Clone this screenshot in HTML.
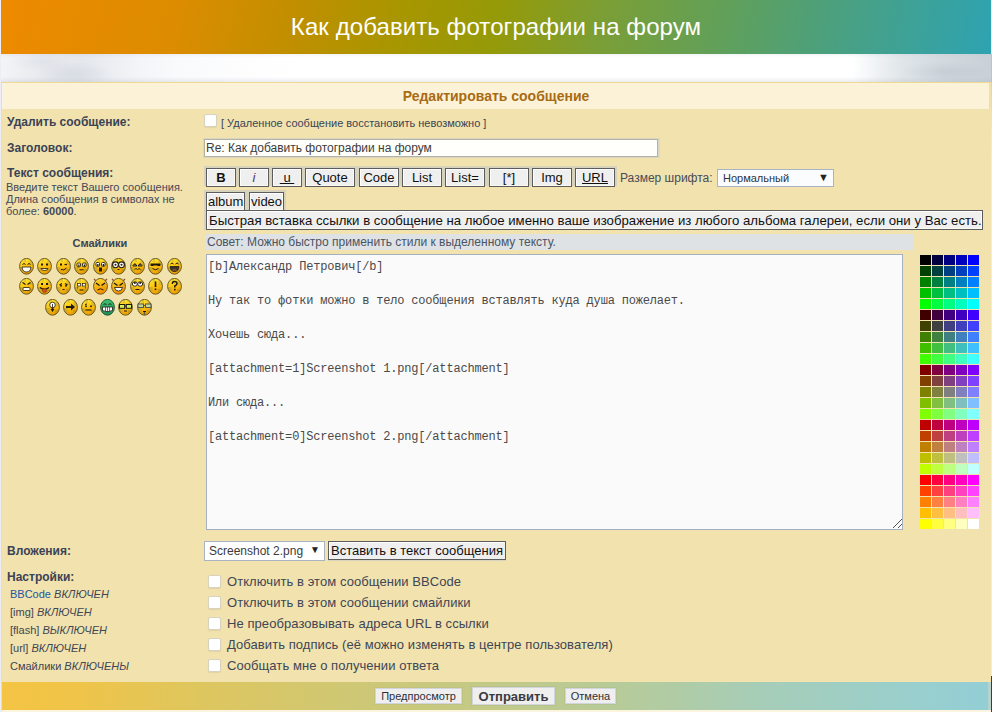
<!DOCTYPE html>
<html><head><meta charset="utf-8">
<style>
*{box-sizing:border-box}
html,body{margin:0;padding:0}
body{width:992px;height:712px;overflow:hidden;position:relative;background:#fdfcf6;font-family:"Liberation Sans",sans-serif;color:#333a48}
.a{position:absolute;white-space:nowrap}
#lcol{position:absolute;left:0;top:0;width:1px;height:712px;background:#eeecf4}
#rcol{position:absolute;left:991px;top:0;width:1px;height:712px;background:linear-gradient(180deg,#e8ecf0 0,#e8ecf0 54px,#b9c5cd 54px,#b9c5cd 82px,#cdd1d5 82px,#e6e6ee 130px,#eceaf4 160px,#eceaf4 676px,#2f4a2a 676px)}
#rcol2{position:absolute;left:988px;top:682px;width:3px;height:28px;background:#b9d3cb}
#hdr{position:absolute;left:1px;top:0;width:990px;height:54px;
 background:linear-gradient(103deg,#ee8a00 0%,#dc8c00 18%,#c08f00 30%,#a89600 40%,#959a08 50%,#7c9e34 60%,#62a058 72%,#4aa080 84%,#2ea3b2 100%)}
#title{position:absolute;left:0;width:990px;top:13px;text-align:center;color:#fff;font-size:24px;line-height:28px;letter-spacing:0.08px}
#cloud{position:absolute;left:1px;top:54px;width:990px;height:28px;
 background:radial-gradient(ellipse 40px 12px at 72px 20px,rgba(170,180,195,0.22),rgba(170,180,195,0)),
 radial-gradient(ellipse 30px 10px at 40px 8px,rgba(170,180,195,0.14),rgba(170,180,195,0)),
 radial-gradient(ellipse 45px 10px at 945px 18px,rgba(140,155,170,0.18),rgba(140,155,170,0)),
 linear-gradient(180deg,rgba(170,180,195,0.14) 0,rgba(170,180,195,0) 12%,rgba(150,165,180,0) 82%,rgba(150,165,180,0.2) 100%),
 linear-gradient(90deg,#f3f4f7 0,#eceef2 2.5%,#e7e9ee 5%,#e4e7ec 8%,#e8ebf0 10%,#eef0f4 12%,#f4f5f8 14%,#f9fafb 18%,#fdfdfe 24%,#fff 30%,#fff 86%,#eff2f4 88.5%,#dfe5e9 91%,#d3dadf 95%,#c8d1d7 100%)}
#tbl{position:absolute;left:1px;top:82px;width:990px;height:630px;background:#f1e2ae;border:1px solid #f0d992;border-left-color:#ece0a8;border-right:0;border-bottom:2px solid #fbf5e0}
#cat{position:absolute;left:0;top:0;width:988px;height:26px;background:#fcf2d7;border-left:1px solid #f9f4e4;border-right:1px solid #f5df98}
#cat span{position:absolute;left:0;width:986px;top:5px;text-align:center;font-weight:bold;font-size:14px;color:#a96b12}
.lbl{font-weight:bold;font-size:12px;line-height:14px;color:#3b4355}
.s11{font-size:11px;line-height:12px}
.cb{position:absolute;width:13px;height:13px;background:#fff;border:1px solid #d6d2c0;border-radius:2px;box-shadow:0 1px 1px rgba(120,110,80,0.12)}
.inp{position:absolute;background:#fffffb;border:1px solid #b4b2a2;box-shadow:0 0 0 1px #d9d6c3,1px 0 0 1px #dcd9c6}
.btn{position:absolute;height:19px;background:#efefef;border:1px solid #5c5c5c;box-shadow:inset 1px 1px 0 #fff,inset -1px -1px 0 #fafaf0;font-size:13px;line-height:17px;text-align:center;color:#111}
.shade{position:absolute;background:#d6d2bc}
.sel{position:absolute;background:#fff;border:1px solid #a9b4c2}
.pal{position:absolute;width:11px;height:10px}
#bar{position:absolute;left:2px;top:682px;width:986px;height:28px;
 background:linear-gradient(90deg,#f4c444 0%,#f0c448 7%,#dec65e 20%,#ccc878 38%,#b7cb98 62%,#a6cdb8 77%,#9acfcb 91%,#93ced6 100%)}
.bb{position:absolute;background:#efefef;border:1px solid #d2d6dc;font-size:11px;line-height:15px;text-align:center;color:#2e2e38;box-shadow:0 0 0 1px rgba(150,150,120,0.12)}
#ta{position:absolute;left:206px;top:254px;width:697px;height:276px;background:#fafafa;border:1px solid #a4b1c2;font-family:"Liberation Mono",monospace;font-size:12px;letter-spacing:-0.19px;line-height:17px;color:#4a4a4a;padding:0 0 0 1px}
#ta div{height:17px;white-space:pre}
</style></head><body>
<div id="lcol"></div>
<div id="hdr"><div id="title">Как добавить фотографии на форум</div></div>
<div id="cloud"></div>
<div id="tbl"><div id="cat"><span>Редактировать сообщение</span></div></div>
<div class="a lbl" style="left:7px;top:115px">Удалить сообщение:</div>
<div class="a lbl" style="left:7px;top:141px">Заголовок:</div>
<div class="a lbl" style="left:7px;top:166px">Текст сообщения:</div>
<div class="a s11" style="left:6px;top:180.5px;color:#434857">Введите текст Вашего сообщения.<br>Длина сообщения в символах не<br>более: <b>60000</b>.</div>
<div class="a lbl" style="left:72.5px;top:236px;font-size:11px">Смайлики</div>
<svg width="0" height="0" style="position:absolute"><defs>
<linearGradient id="gy" x1="0" y1="0" x2="0.3" y2="1"><stop offset="0" stop-color="#fff23a"/><stop offset="0.5" stop-color="#ffc814"/><stop offset="1" stop-color="#eea000"/></linearGradient>
<linearGradient id="go" x1="0" y1="0" x2="0.3" y2="1"><stop offset="0" stop-color="#ffe030"/><stop offset="1" stop-color="#f09000"/></linearGradient>
<clipPath id="fc"><ellipse cx="7.5" cy="8.3" rx="6.9" ry="7.9"/></clipPath>
<linearGradient id="gg" x1="0" y1="0" x2="0" y2="1"><stop offset="0" stop-color="#3fc070"/><stop offset="1" stop-color="#1f8a50"/></linearGradient>
</defs></svg><svg class="a" style="left:19px;top:258px" width="15" height="17" viewBox="0 0 15 17"><ellipse cx="7.5" cy="8.3" rx="6.9" ry="7.9" fill="url(#gy)"/><g clip-path="url(#fc)" opacity="0.45"><rect x="0" y="9" width="4.5" height="8" fill="#a09a48"/><rect x="10.5" y="1" width="5" height="6" fill="#b0a448"/><rect x="10" y="11" width="5" height="6" fill="#a08a30"/><rect x="4.5" y="0" width="2.5" height="4" fill="#c0b040"/></g><ellipse cx="7.5" cy="8.3" rx="6.9" ry="7.9" fill="none" stroke="#6b5a24" stroke-width="1"/><path d="M3.5 6.5Q5 4.5 6.5 6.5M8.5 6.5Q10 4.5 11.5 6.5" stroke="#1e1a10" fill="none" stroke-width="1"/><path d="M3 9H12Q11.5 14 7.5 14Q3.5 14 3 9Z" fill="#fff" stroke="#1e1a10" stroke-width="0.8"/></svg><svg class="a" style="left:37px;top:258px" width="15" height="17" viewBox="0 0 15 17"><ellipse cx="7.5" cy="8.3" rx="6.9" ry="7.9" fill="url(#gy)"/><g clip-path="url(#fc)" opacity="0.45"><rect x="0" y="9" width="4.5" height="8" fill="#a09a48"/><rect x="10.5" y="1" width="5" height="6" fill="#b0a448"/><rect x="10" y="11" width="5" height="6" fill="#a08a30"/><rect x="4.5" y="0" width="2.5" height="4" fill="#c0b040"/></g><ellipse cx="7.5" cy="8.3" rx="6.9" ry="7.9" fill="none" stroke="#6b5a24" stroke-width="1"/><rect x="4" y="5.5" width="2" height="2" fill="#1e1a10"/><rect x="9" y="5.5" width="2" height="2" fill="#1e1a10"/><path d="M4 10.5H11Q10.5 12.5 7.5 12.5Q4.5 12.5 4 10.5Z" fill="#fff8d0" stroke="#1e1a10" stroke-width="0.8"/></svg><svg class="a" style="left:56px;top:258px" width="15" height="17" viewBox="0 0 15 17"><ellipse cx="7.5" cy="8.3" rx="6.9" ry="7.9" fill="url(#gy)"/><g clip-path="url(#fc)" opacity="0.45"><rect x="0" y="9" width="4.5" height="8" fill="#a09a48"/><rect x="10.5" y="1" width="5" height="6" fill="#b0a448"/><rect x="10" y="11" width="5" height="6" fill="#a08a30"/><rect x="4.5" y="0" width="2.5" height="4" fill="#c0b040"/></g><ellipse cx="7.5" cy="8.3" rx="6.9" ry="7.9" fill="none" stroke="#6b5a24" stroke-width="1"/><rect x="4" y="5.5" width="2" height="2" fill="#1e1a10"/><path d="M8.5 6.5H11" stroke="#1e1a10" stroke-width="1.2"/><path d="M5 11.5Q8 13 10.5 10" stroke="#1e1a10" fill="none" stroke-width="1"/></svg><svg class="a" style="left:74px;top:258px" width="15" height="17" viewBox="0 0 15 17"><ellipse cx="7.5" cy="8.3" rx="6.9" ry="7.9" fill="url(#gy)"/><g clip-path="url(#fc)" opacity="0.45"><rect x="0" y="9" width="4.5" height="8" fill="#a09a48"/><rect x="10.5" y="1" width="5" height="6" fill="#b0a448"/><rect x="10" y="11" width="5" height="6" fill="#a08a30"/><rect x="4.5" y="0" width="2.5" height="4" fill="#c0b040"/></g><ellipse cx="7.5" cy="8.3" rx="6.9" ry="7.9" fill="none" stroke="#6b5a24" stroke-width="1"/><rect x="3" y="5" width="3.5" height="3.8" rx="1" fill="#fff" stroke="#1e1a10" stroke-width="0.9"/><rect x="8.5" y="5" width="3.5" height="3.8" rx="1" fill="#fff" stroke="#1e1a10" stroke-width="0.9"/><rect x="4.2" y="6.5" width="1.3" height="2" fill="#1e1a10"/><rect x="9.7" y="6.5" width="1.3" height="2" fill="#1e1a10"/><path d="M5.5 11.8H9.5" stroke="#1e1a10" stroke-width="1"/></svg><svg class="a" style="left:93px;top:258px" width="15" height="17" viewBox="0 0 15 17"><ellipse cx="7.5" cy="8.3" rx="6.9" ry="7.9" fill="url(#gy)"/><g clip-path="url(#fc)" opacity="0.45"><rect x="0" y="9" width="4.5" height="8" fill="#a09a48"/><rect x="10.5" y="1" width="5" height="6" fill="#b0a448"/><rect x="10" y="11" width="5" height="6" fill="#a08a30"/><rect x="4.5" y="0" width="2.5" height="4" fill="#c0b040"/></g><ellipse cx="7.5" cy="8.3" rx="6.9" ry="7.9" fill="none" stroke="#6b5a24" stroke-width="1"/><rect x="3" y="4.5" width="3.5" height="3.8" rx="1" fill="#fff" stroke="#1e1a10" stroke-width="0.9"/><rect x="8.5" y="4.5" width="3.5" height="3.8" rx="1" fill="#fff" stroke="#1e1a10" stroke-width="0.9"/><rect x="4.2" y="6" width="1.3" height="2" fill="#1e1a10"/><rect x="9.7" y="6" width="1.3" height="2" fill="#1e1a10"/><rect x="6" y="9.5" width="3" height="4" fill="#1e1a10"/></svg><svg class="a" style="left:111px;top:258px" width="15" height="17" viewBox="0 0 15 17"><ellipse cx="7.5" cy="8.3" rx="6.9" ry="7.9" fill="url(#gy)"/><g clip-path="url(#fc)" opacity="0.45"><rect x="0" y="9" width="4.5" height="8" fill="#a09a48"/><rect x="10.5" y="1" width="5" height="6" fill="#b0a448"/><rect x="10" y="11" width="5" height="6" fill="#a08a30"/><rect x="4.5" y="0" width="2.5" height="4" fill="#c0b040"/></g><ellipse cx="7.5" cy="8.3" rx="6.9" ry="7.9" fill="none" stroke="#6b5a24" stroke-width="1"/><circle cx="4.5" cy="6.8" r="2.9" fill="#fff" stroke="#1e1a10" stroke-width="1.1"/><circle cx="10.5" cy="6.8" r="2.9" fill="#fff" stroke="#1e1a10" stroke-width="1.1"/><circle cx="4.5" cy="6.8" r="1" fill="#1e1a10"/><circle cx="10.5" cy="6.8" r="1" fill="#1e1a10"/><path d="M6.5 11.5H8.5" stroke="#1e1a10" stroke-width="1"/></svg><svg class="a" style="left:130px;top:258px" width="15" height="17" viewBox="0 0 15 17"><ellipse cx="7.5" cy="8.3" rx="6.9" ry="7.9" fill="url(#gy)"/><g clip-path="url(#fc)" opacity="0.45"><rect x="0" y="9" width="4.5" height="8" fill="#a09a48"/><rect x="10.5" y="1" width="5" height="6" fill="#b0a448"/><rect x="10" y="11" width="5" height="6" fill="#a08a30"/><rect x="4.5" y="0" width="2.5" height="4" fill="#c0b040"/></g><ellipse cx="7.5" cy="8.3" rx="6.9" ry="7.9" fill="none" stroke="#6b5a24" stroke-width="1"/><path d="M2.8 8Q4.8 3.5 6.8 8Z M8.2 8Q10.2 3.5 12.2 8Z" fill="#fff" stroke="#1e1a10" stroke-width="1"/><circle cx="5" cy="6.8" r="0.9" fill="#1e1a10"/><circle cx="10" cy="6.8" r="0.9" fill="#1e1a10"/><path d="M4.5 11.5L6 10.5L7.5 11.5L9 10.5L10.5 11.5" stroke="#1e1a10" fill="none" stroke-width="0.9"/></svg><svg class="a" style="left:148px;top:258px" width="15" height="17" viewBox="0 0 15 17"><ellipse cx="7.5" cy="8.3" rx="6.9" ry="7.9" fill="url(#gy)"/><g clip-path="url(#fc)" opacity="0.45"><rect x="0" y="9" width="4.5" height="8" fill="#a09a48"/><rect x="10.5" y="1" width="5" height="6" fill="#b0a448"/><rect x="10" y="11" width="5" height="6" fill="#a08a30"/><rect x="4.5" y="0" width="2.5" height="4" fill="#c0b040"/></g><ellipse cx="7.5" cy="8.3" rx="6.9" ry="7.9" fill="none" stroke="#6b5a24" stroke-width="1"/><path d="M2.5 5.5H12.5V7.5Q11 8.5 9 7.5H6Q4 8.5 2.5 7.5Z" fill="#1e1a10"/><path d="M4.5 10.5Q7.5 13 10.5 10.5" stroke="#1e1a10" fill="none" stroke-width="1"/></svg><svg class="a" style="left:167px;top:258px" width="15" height="17" viewBox="0 0 15 17"><ellipse cx="7.5" cy="8.3" rx="6.9" ry="7.9" fill="url(#gy)"/><g clip-path="url(#fc)" opacity="0.45"><rect x="0" y="9" width="4.5" height="8" fill="#a09a48"/><rect x="10.5" y="1" width="5" height="6" fill="#b0a448"/><rect x="10" y="11" width="5" height="6" fill="#a08a30"/><rect x="4.5" y="0" width="2.5" height="4" fill="#c0b040"/></g><ellipse cx="7.5" cy="8.3" rx="6.9" ry="7.9" fill="none" stroke="#6b5a24" stroke-width="1"/><path d="M3.5 6Q5 4 6.5 6M8.5 6Q10 4 11.5 6" stroke="#1e1a10" fill="none" stroke-width="1"/><path d="M3 8.5H12Q11.5 13.5 7.5 13.5Q3.5 13.5 3 8.5Z" fill="#3a3530" stroke="#1e1a10" stroke-width="0.8"/><path d="M5.5 12.3Q7.5 11 9.5 12.3" stroke="#d06020" stroke-width="1" fill="none"/></svg><svg class="a" style="left:19px;top:278px" width="15" height="17" viewBox="0 0 15 17"><ellipse cx="7.5" cy="8.3" rx="6.9" ry="7.9" fill="url(#gy)"/><g clip-path="url(#fc)" opacity="0.45"><rect x="0" y="9" width="4.5" height="8" fill="#a09a48"/><rect x="10.5" y="1" width="5" height="6" fill="#b0a448"/><rect x="10" y="11" width="5" height="6" fill="#a08a30"/><rect x="4.5" y="0" width="2.5" height="4" fill="#c0b040"/></g><ellipse cx="7.5" cy="8.3" rx="6.9" ry="7.9" fill="none" stroke="#6b5a24" stroke-width="1"/><path d="M3.5 4.5L6.5 6.5M11.5 4.5L8.5 6.5" stroke="#1e1a10" stroke-width="1.2"/><rect x="4" y="9.5" width="7" height="3" rx="1" fill="#fff" stroke="#1e1a10" stroke-width="0.8"/></svg><svg class="a" style="left:37px;top:278px" width="15" height="17" viewBox="0 0 15 17"><ellipse cx="7.5" cy="8.3" rx="6.9" ry="7.9" fill="url(#gy)"/><g clip-path="url(#fc)" opacity="0.45"><rect x="0" y="9" width="4.5" height="8" fill="#a09a48"/><rect x="10.5" y="1" width="5" height="6" fill="#b0a448"/><rect x="10" y="11" width="5" height="6" fill="#a08a30"/><rect x="4.5" y="0" width="2.5" height="4" fill="#c0b040"/></g><ellipse cx="7.5" cy="8.3" rx="6.9" ry="7.9" fill="none" stroke="#6b5a24" stroke-width="1"/><rect x="4" y="5" width="2" height="2" fill="#1e1a10"/><rect x="9" y="5" width="2" height="2" fill="#1e1a10"/><path d="M3 9.5Q7.5 13 12 9.5" stroke="#1e1a10" fill="none" stroke-width="1.3"/><ellipse cx="7.5" cy="12.6" rx="2.2" ry="2" fill="#d05020" stroke="#6a3010" stroke-width="0.5"/></svg><svg class="a" style="left:56px;top:278px" width="15" height="17" viewBox="0 0 15 17"><ellipse cx="7.5" cy="8.3" rx="6.9" ry="7.9" fill="url(#gy)"/><g clip-path="url(#fc)" opacity="0.45"><rect x="0" y="9" width="4.5" height="8" fill="#a09a48"/><rect x="10.5" y="1" width="5" height="6" fill="#b0a448"/><rect x="10" y="11" width="5" height="6" fill="#a08a30"/><rect x="4.5" y="0" width="2.5" height="4" fill="#c0b040"/></g><ellipse cx="7.5" cy="8.3" rx="6.9" ry="7.9" fill="none" stroke="#6b5a24" stroke-width="1"/><path d="M3.5 7L6 5.5M11.5 7L9 5.5" stroke="#1e1a10" stroke-width="1.1"/><rect x="4.2" y="7" width="1.6" height="1.6" fill="#1e1a10"/><rect x="9.2" y="7" width="1.6" height="1.6" fill="#1e1a10"/><path d="M6.5 11.5H8.5" stroke="#1e1a10" stroke-width="1"/></svg><svg class="a" style="left:74px;top:278px" width="15" height="17" viewBox="0 0 15 17"><ellipse cx="7.5" cy="8.3" rx="6.9" ry="7.9" fill="url(#gy)"/><g clip-path="url(#fc)" opacity="0.45"><rect x="0" y="9" width="4.5" height="8" fill="#a09a48"/><rect x="10.5" y="1" width="5" height="6" fill="#b0a448"/><rect x="10" y="11" width="5" height="6" fill="#a08a30"/><rect x="4.5" y="0" width="2.5" height="4" fill="#c0b040"/></g><ellipse cx="7.5" cy="8.3" rx="6.9" ry="7.9" fill="none" stroke="#6b5a24" stroke-width="1"/><rect x="3.5" y="5.5" width="3" height="2.5" fill="#fff" stroke="#1e1a10" stroke-width="0.7"/><rect x="8.5" y="5.5" width="3" height="2.5" fill="#fff" stroke="#1e1a10" stroke-width="0.7"/><path d="M3.5 8.5V10.5M11.5 8.5V10.5" stroke="#3070d0" stroke-width="1.3"/><path d="M5.5 12H9.5" stroke="#1e1a10" stroke-width="1"/></svg><svg class="a" style="left:93px;top:278px" width="15" height="17" viewBox="0 0 15 17"><path d="M1 1L4 4M14 1L11 4" stroke="#8a5030" stroke-width="1.3"/><ellipse cx="7.5" cy="8.3" rx="6.9" ry="7.9" fill="url(#go)"/><ellipse cx="7.5" cy="8.3" rx="6.9" ry="7.9" fill="none" stroke="#6b5a24" stroke-width="1"/><path d="M3 5L6.5 7.5M12 5L8.5 7.5" stroke="#1e1a10" stroke-width="1.4"/><path d="M4.5 12Q7.5 9.5 10.5 12" stroke="#1e1a10" fill="none" stroke-width="1"/></svg><svg class="a" style="left:111px;top:278px" width="15" height="17" viewBox="0 0 15 17"><path d="M1 1L4 4M14 1L11 4" stroke="#8a5030" stroke-width="1.3"/><ellipse cx="7.5" cy="8.3" rx="6.9" ry="7.9" fill="url(#go)"/><ellipse cx="7.5" cy="8.3" rx="6.9" ry="7.9" fill="none" stroke="#6b5a24" stroke-width="1"/><path d="M3 5L6.5 7.5M12 5L8.5 7.5" stroke="#1e1a10" stroke-width="1.4"/><path d="M3.5 9.5H11.5Q11 13 7.5 13Q4 13 3.5 9.5Z" fill="#fff" stroke="#1e1a10" stroke-width="0.8"/></svg><svg class="a" style="left:130px;top:278px" width="15" height="17" viewBox="0 0 15 17"><ellipse cx="7.5" cy="8.3" rx="6.9" ry="7.9" fill="url(#gy)"/><g clip-path="url(#fc)" opacity="0.45"><rect x="0" y="9" width="4.5" height="8" fill="#a09a48"/><rect x="10.5" y="1" width="5" height="6" fill="#b0a448"/><rect x="10" y="11" width="5" height="6" fill="#a08a30"/><rect x="4.5" y="0" width="2.5" height="4" fill="#c0b040"/></g><ellipse cx="7.5" cy="8.3" rx="6.9" ry="7.9" fill="none" stroke="#6b5a24" stroke-width="1"/><ellipse cx="4.8" cy="6" rx="2.5" ry="2.2" fill="#fff" stroke="#1e1a10" stroke-width="0.9"/><ellipse cx="10.2" cy="6" rx="2.5" ry="2.2" fill="#fff" stroke="#1e1a10" stroke-width="0.9"/><circle cx="4.8" cy="4.9" r="1" fill="#1e1a10"/><circle cx="10.2" cy="4.9" r="1" fill="#1e1a10"/><path d="M5.5 11.5H9.5" stroke="#1e1a10" stroke-width="1"/></svg><svg class="a" style="left:148px;top:278px" width="15" height="17" viewBox="0 0 15 17"><ellipse cx="7.5" cy="8.3" rx="6.9" ry="7.9" fill="url(#gy)"/><g clip-path="url(#fc)" opacity="0.45"><rect x="0" y="9" width="4.5" height="8" fill="#a09a48"/><rect x="10.5" y="1" width="5" height="6" fill="#b0a448"/><rect x="10" y="11" width="5" height="6" fill="#a08a30"/><rect x="4.5" y="0" width="2.5" height="4" fill="#c0b040"/></g><ellipse cx="7.5" cy="8.3" rx="6.9" ry="7.9" fill="none" stroke="#6b5a24" stroke-width="1"/><path d="M7.5 3.5V9" stroke="#1e1a10" stroke-width="1.6"/><rect x="6.7" y="10.5" width="1.6" height="1.6" fill="#1e1a10"/></svg><svg class="a" style="left:167px;top:278px" width="15" height="17" viewBox="0 0 15 17"><ellipse cx="7.5" cy="8.3" rx="6.9" ry="7.9" fill="url(#gy)"/><g clip-path="url(#fc)" opacity="0.45"><rect x="0" y="9" width="4.5" height="8" fill="#a09a48"/><rect x="10.5" y="1" width="5" height="6" fill="#b0a448"/><rect x="10" y="11" width="5" height="6" fill="#a08a30"/><rect x="4.5" y="0" width="2.5" height="4" fill="#c0b040"/></g><ellipse cx="7.5" cy="8.3" rx="6.9" ry="7.9" fill="none" stroke="#6b5a24" stroke-width="1"/><path d="M5.2 5.8Q5.5 3.5 7.5 3.5Q10 3.5 10 5.5Q10 7 7.8 8V9.5" stroke="#1e1a10" fill="none" stroke-width="1.5"/><rect x="7" y="10.8" width="1.6" height="1.6" fill="#1e1a10"/></svg><svg class="a" style="left:45px;top:299px" width="15" height="17" viewBox="0 0 15 17"><ellipse cx="7.5" cy="8.3" rx="6.9" ry="7.9" fill="url(#gy)"/><g clip-path="url(#fc)" opacity="0.45"><rect x="0" y="9" width="4.5" height="8" fill="#a09a48"/><rect x="10.5" y="1" width="5" height="6" fill="#b0a448"/><rect x="10" y="11" width="5" height="6" fill="#a08a30"/><rect x="4.5" y="0" width="2.5" height="4" fill="#c0b040"/></g><ellipse cx="7.5" cy="8.3" rx="6.9" ry="7.9" fill="none" stroke="#6b5a24" stroke-width="1"/><circle cx="7.5" cy="6" r="2.8" fill="#fff" stroke="#1e1a10" stroke-width="0.8"/><path d="M7.5 5V10M6 10H9L7.5 12.5Z" stroke="#1e1a10" fill="#1e1a10" stroke-width="0.8"/></svg><svg class="a" style="left:63px;top:299px" width="15" height="17" viewBox="0 0 15 17"><ellipse cx="7.5" cy="8.3" rx="6.9" ry="7.9" fill="url(#gy)"/><g clip-path="url(#fc)" opacity="0.45"><rect x="0" y="9" width="4.5" height="8" fill="#a09a48"/><rect x="10.5" y="1" width="5" height="6" fill="#b0a448"/><rect x="10" y="11" width="5" height="6" fill="#a08a30"/><rect x="4.5" y="0" width="2.5" height="4" fill="#c0b040"/></g><ellipse cx="7.5" cy="8.3" rx="6.9" ry="7.9" fill="none" stroke="#6b5a24" stroke-width="1"/><path d="M3 7H8V4.5L12 8L8 11.5V9H3Z" fill="#1e1a10"/></svg><svg class="a" style="left:81px;top:299px" width="15" height="17" viewBox="0 0 15 17"><ellipse cx="7.5" cy="8.3" rx="6.9" ry="7.9" fill="url(#gy)"/><g clip-path="url(#fc)" opacity="0.45"><rect x="0" y="9" width="4.5" height="8" fill="#a09a48"/><rect x="10.5" y="1" width="5" height="6" fill="#b0a448"/><rect x="10" y="11" width="5" height="6" fill="#a08a30"/><rect x="4.5" y="0" width="2.5" height="4" fill="#c0b040"/></g><ellipse cx="7.5" cy="8.3" rx="6.9" ry="7.9" fill="none" stroke="#6b5a24" stroke-width="1"/><path d="M4 5.5L6 5" stroke="#1e1a10" stroke-width="1"/><rect x="4.2" y="6.5" width="1.6" height="1.6" fill="#1e1a10"/><rect x="9.2" y="6.5" width="1.6" height="1.6" fill="#1e1a10"/><path d="M4.5 11H10.5" stroke="#1e1a10" stroke-width="1.1"/></svg><svg class="a" style="left:100px;top:299px" width="15" height="17" viewBox="0 0 15 17"><ellipse cx="7.5" cy="8.3" rx="6.9" ry="7.9" fill="url(#gg)"/><ellipse cx="7.5" cy="8.3" rx="6.9" ry="7.9" fill="none" stroke="#1f5f3a" stroke-width="1"/><path d="M3.5 5.5Q5 4 6.5 5.5M8.5 5.5Q10 4 11.5 5.5" stroke="#1e1a10" fill="none" stroke-width="0.9"/><path d="M2.5 8H12.5V11.5Q7.5 14 2.5 11.5Z" fill="#fff" stroke="#1e1a10" stroke-width="0.8"/><path d="M5.5 8V12.5M7.5 8V13M9.5 8V12.5" stroke="#1e1a10" stroke-width="0.6"/></svg><svg class="a" style="left:118px;top:299px" width="15" height="17" viewBox="0 0 15 17"><ellipse cx="7.5" cy="8.3" rx="6.9" ry="7.9" fill="url(#gy)"/><g clip-path="url(#fc)" opacity="0.45"><rect x="0" y="9" width="4.5" height="8" fill="#a09a48"/><rect x="10.5" y="1" width="5" height="6" fill="#b0a448"/><rect x="10" y="11" width="5" height="6" fill="#a08a30"/><rect x="4.5" y="0" width="2.5" height="4" fill="#c0b040"/></g><ellipse cx="7.5" cy="8.3" rx="6.9" ry="7.9" fill="none" stroke="#6b5a24" stroke-width="1"/><rect x="1.5" y="5.5" width="5.2" height="3.8" fill="#d8f060" stroke="#1e1a10" stroke-width="1"/><rect x="8.3" y="5.5" width="5.2" height="3.8" fill="#d8f060" stroke="#1e1a10" stroke-width="1"/><path d="M6.7 7H8.3" stroke="#1e1a10" stroke-width="1"/><path d="M6 12H9" stroke="#1e1a10" stroke-width="1"/></svg><svg class="a" style="left:137px;top:299px" width="15" height="17" viewBox="0 0 15 17"><ellipse cx="7.5" cy="8.3" rx="6.9" ry="7.9" fill="url(#gy)"/><g clip-path="url(#fc)" opacity="0.45"><rect x="0" y="9" width="4.5" height="8" fill="#a09a48"/><rect x="10.5" y="1" width="5" height="6" fill="#b0a448"/><rect x="10" y="11" width="5" height="6" fill="#a08a30"/><rect x="4.5" y="0" width="2.5" height="4" fill="#c0b040"/></g><ellipse cx="7.5" cy="8.3" rx="6.9" ry="7.9" fill="none" stroke="#6b5a24" stroke-width="1"/><rect x="1" y="5" width="5.5" height="3.5" fill="#c8d890" stroke="#555" stroke-width="1"/><rect x="8.5" y="5" width="5.5" height="3.5" fill="#c8d890" stroke="#555" stroke-width="1"/><path d="M6.5 6.5H8.5" stroke="#555" stroke-width="1"/><path d="M6 12.5H9" stroke="#1e1a10" stroke-width="1"/><path d="M7.5 13V16" stroke="#6a5a40" stroke-width="1.5"/></svg>
<div class="cb" style="left:204px;top:114px;width:13px;height:13px"></div>
<div class="a s11" style="left:221px;top:117px;color:#3a4456">[ Удаленное сообщение восстановить невозможно ]</div>
<div class="inp" style="left:204px;top:139px;width:454px;height:18px"></div>
<div class="a" style="left:206px;top:141px;font-size:12px;line-height:14px;color:#3c3c3c">Re: Как добавить фотографии на форум</div>
<div class="shade" style="left:204px;top:166px;width:413px;height:20px"></div>
<div class="btn" style="left:206px;top:168px;width:30px;font-weight:bold">B</div>
<div class="btn" style="left:239px;top:168px;width:30px;font-style:italic;color:#553366">i</div>
<div class="btn" style="left:272px;top:168px;width:30px;text-decoration:underline">&nbsp;u&nbsp;</div>
<div class="btn" style="left:305px;top:168px;width:50px;">Quote</div>
<div class="btn" style="left:359px;top:168px;width:40px;">Code</div>
<div class="btn" style="left:402px;top:168px;width:40px;">List</div>
<div class="btn" style="left:445px;top:168px;width:40px;">List=</div>
<div class="btn" style="left:489px;top:168px;width:40px;">[*]</div>
<div class="btn" style="left:532px;top:168px;width:40px;">Img</div>
<div class="btn" style="left:575px;top:168px;width:40px;text-decoration:underline">URL</div>
<div class="a" style="left:620px;top:171px;font-size:12px;line-height:14px;color:#474c58">Размер шрифта:</div>
<div class="sel" style="left:717px;top:169px;width:117px;height:18px;background:#fbfcfd"></div>
<div class="a s11" style="left:723px;top:172px;color:#2e3440">Нормальный</div>
<div class="a" style="left:818px;top:170px;font-size:11px;line-height:14px;color:#222">▼</div>
<div class="shade" style="left:204px;top:190px;width:82px;height:20px"></div>
<div class="btn" style="left:206px;top:192px;width:39px;text-align:left;padding-left:1px">album</div>
<div class="btn" style="left:249px;top:192px;width:35px;text-align:left;padding-left:1px">video</div>
<div class="shade" style="left:204px;top:210px;width:2px;height:20px"></div>
<div class="btn" style="left:206px;top:210px;width:777px;height:20px;text-align:left;padding-left:2px;font-size:13.2px;line-height:19px">Быстрая вставка ссылки в сообщение на любое именно ваше изображение из любого альбома галереи, если они у Вас есть.</div>
<div class="a" style="left:206px;top:234px;width:708px;height:16px;background:#dfe2e5"></div>
<div class="a" style="left:207px;top:235px;font-size:12px;line-height:14px;color:#4a5464">Совет: Можно быстро применить стили к выделенному тексту.</div>
<div id="ta"><div style="height:4px"></div><div>[b]Александр Петрович[/b]</div><div> </div><div>Ну так то фотки можно в тело сообщения вставлять куда душа пожелает.</div><div> </div><div>Хочешь сюда...</div><div> </div><div>[attachment=1]Screenshot 1.png[/attachment]</div><div> </div><div>Или сюда...</div><div> </div><div>[attachment=0]Screenshot 2.png[/attachment]</div></div>
<svg class="a" style="left:891px;top:517px" width="12" height="12"><path d="M11 2L2 11M11 7L7 11" stroke="#555" stroke-width="1"/></svg>
<div class="pal" style="left:920px;top:255px;background:#000000"></div><div class="pal" style="left:932px;top:255px;background:#000040"></div><div class="pal" style="left:944px;top:255px;background:#000080"></div><div class="pal" style="left:956px;top:255px;background:#0000BF"></div><div class="pal" style="left:968px;top:255px;background:#0000FF"></div><div class="pal" style="left:920px;top:266px;background:#004000"></div><div class="pal" style="left:932px;top:266px;background:#004040"></div><div class="pal" style="left:944px;top:266px;background:#004080"></div><div class="pal" style="left:956px;top:266px;background:#0040BF"></div><div class="pal" style="left:968px;top:266px;background:#0040FF"></div><div class="pal" style="left:920px;top:277px;background:#008000"></div><div class="pal" style="left:932px;top:277px;background:#008040"></div><div class="pal" style="left:944px;top:277px;background:#008080"></div><div class="pal" style="left:956px;top:277px;background:#0080BF"></div><div class="pal" style="left:968px;top:277px;background:#0080FF"></div><div class="pal" style="left:920px;top:288px;background:#00BF00"></div><div class="pal" style="left:932px;top:288px;background:#00BF40"></div><div class="pal" style="left:944px;top:288px;background:#00BF80"></div><div class="pal" style="left:956px;top:288px;background:#00BFBF"></div><div class="pal" style="left:968px;top:288px;background:#00BFFF"></div><div class="pal" style="left:920px;top:299px;background:#00FF00"></div><div class="pal" style="left:932px;top:299px;background:#00FF40"></div><div class="pal" style="left:944px;top:299px;background:#00FF80"></div><div class="pal" style="left:956px;top:299px;background:#00FFBF"></div><div class="pal" style="left:968px;top:299px;background:#00FFFF"></div><div class="pal" style="left:920px;top:310px;background:#400000"></div><div class="pal" style="left:932px;top:310px;background:#400040"></div><div class="pal" style="left:944px;top:310px;background:#400080"></div><div class="pal" style="left:956px;top:310px;background:#4000BF"></div><div class="pal" style="left:968px;top:310px;background:#4000FF"></div><div class="pal" style="left:920px;top:321px;background:#404000"></div><div class="pal" style="left:932px;top:321px;background:#404040"></div><div class="pal" style="left:944px;top:321px;background:#404080"></div><div class="pal" style="left:956px;top:321px;background:#4040BF"></div><div class="pal" style="left:968px;top:321px;background:#4040FF"></div><div class="pal" style="left:920px;top:332px;background:#408000"></div><div class="pal" style="left:932px;top:332px;background:#408040"></div><div class="pal" style="left:944px;top:332px;background:#408080"></div><div class="pal" style="left:956px;top:332px;background:#4080BF"></div><div class="pal" style="left:968px;top:332px;background:#4080FF"></div><div class="pal" style="left:920px;top:343px;background:#40BF00"></div><div class="pal" style="left:932px;top:343px;background:#40BF40"></div><div class="pal" style="left:944px;top:343px;background:#40BF80"></div><div class="pal" style="left:956px;top:343px;background:#40BFBF"></div><div class="pal" style="left:968px;top:343px;background:#40BFFF"></div><div class="pal" style="left:920px;top:354px;background:#40FF00"></div><div class="pal" style="left:932px;top:354px;background:#40FF40"></div><div class="pal" style="left:944px;top:354px;background:#40FF80"></div><div class="pal" style="left:956px;top:354px;background:#40FFBF"></div><div class="pal" style="left:968px;top:354px;background:#40FFFF"></div><div class="pal" style="left:920px;top:365px;background:#800000"></div><div class="pal" style="left:932px;top:365px;background:#800040"></div><div class="pal" style="left:944px;top:365px;background:#800080"></div><div class="pal" style="left:956px;top:365px;background:#8000BF"></div><div class="pal" style="left:968px;top:365px;background:#8000FF"></div><div class="pal" style="left:920px;top:376px;background:#804000"></div><div class="pal" style="left:932px;top:376px;background:#804040"></div><div class="pal" style="left:944px;top:376px;background:#804080"></div><div class="pal" style="left:956px;top:376px;background:#8040BF"></div><div class="pal" style="left:968px;top:376px;background:#8040FF"></div><div class="pal" style="left:920px;top:387px;background:#808000"></div><div class="pal" style="left:932px;top:387px;background:#808040"></div><div class="pal" style="left:944px;top:387px;background:#808080"></div><div class="pal" style="left:956px;top:387px;background:#8080BF"></div><div class="pal" style="left:968px;top:387px;background:#8080FF"></div><div class="pal" style="left:920px;top:398px;background:#80BF00"></div><div class="pal" style="left:932px;top:398px;background:#80BF40"></div><div class="pal" style="left:944px;top:398px;background:#80BF80"></div><div class="pal" style="left:956px;top:398px;background:#80BFBF"></div><div class="pal" style="left:968px;top:398px;background:#80BFFF"></div><div class="pal" style="left:920px;top:409px;background:#80FF00"></div><div class="pal" style="left:932px;top:409px;background:#80FF40"></div><div class="pal" style="left:944px;top:409px;background:#80FF80"></div><div class="pal" style="left:956px;top:409px;background:#80FFBF"></div><div class="pal" style="left:968px;top:409px;background:#80FFFF"></div><div class="pal" style="left:920px;top:420px;background:#BF0000"></div><div class="pal" style="left:932px;top:420px;background:#BF0040"></div><div class="pal" style="left:944px;top:420px;background:#BF0080"></div><div class="pal" style="left:956px;top:420px;background:#BF00BF"></div><div class="pal" style="left:968px;top:420px;background:#BF00FF"></div><div class="pal" style="left:920px;top:431px;background:#BF4000"></div><div class="pal" style="left:932px;top:431px;background:#BF4040"></div><div class="pal" style="left:944px;top:431px;background:#BF4080"></div><div class="pal" style="left:956px;top:431px;background:#BF40BF"></div><div class="pal" style="left:968px;top:431px;background:#BF40FF"></div><div class="pal" style="left:920px;top:442px;background:#BF8000"></div><div class="pal" style="left:932px;top:442px;background:#BF8040"></div><div class="pal" style="left:944px;top:442px;background:#BF8080"></div><div class="pal" style="left:956px;top:442px;background:#BF80BF"></div><div class="pal" style="left:968px;top:442px;background:#BF80FF"></div><div class="pal" style="left:920px;top:453px;background:#BFBF00"></div><div class="pal" style="left:932px;top:453px;background:#BFBF40"></div><div class="pal" style="left:944px;top:453px;background:#BFBF80"></div><div class="pal" style="left:956px;top:453px;background:#BFBFBF"></div><div class="pal" style="left:968px;top:453px;background:#BFBFFF"></div><div class="pal" style="left:920px;top:464px;background:#BFFF00"></div><div class="pal" style="left:932px;top:464px;background:#BFFF40"></div><div class="pal" style="left:944px;top:464px;background:#BFFF80"></div><div class="pal" style="left:956px;top:464px;background:#BFFFBF"></div><div class="pal" style="left:968px;top:464px;background:#BFFFFF"></div><div class="pal" style="left:920px;top:475px;background:#FF0000"></div><div class="pal" style="left:932px;top:475px;background:#FF0040"></div><div class="pal" style="left:944px;top:475px;background:#FF0080"></div><div class="pal" style="left:956px;top:475px;background:#FF00BF"></div><div class="pal" style="left:968px;top:475px;background:#FF00FF"></div><div class="pal" style="left:920px;top:486px;background:#FF4000"></div><div class="pal" style="left:932px;top:486px;background:#FF4040"></div><div class="pal" style="left:944px;top:486px;background:#FF4080"></div><div class="pal" style="left:956px;top:486px;background:#FF40BF"></div><div class="pal" style="left:968px;top:486px;background:#FF40FF"></div><div class="pal" style="left:920px;top:497px;background:#FF8000"></div><div class="pal" style="left:932px;top:497px;background:#FF8040"></div><div class="pal" style="left:944px;top:497px;background:#FF8080"></div><div class="pal" style="left:956px;top:497px;background:#FF80BF"></div><div class="pal" style="left:968px;top:497px;background:#FF80FF"></div><div class="pal" style="left:920px;top:508px;background:#FFBF00"></div><div class="pal" style="left:932px;top:508px;background:#FFBF40"></div><div class="pal" style="left:944px;top:508px;background:#FFBF80"></div><div class="pal" style="left:956px;top:508px;background:#FFBFBF"></div><div class="pal" style="left:968px;top:508px;background:#FFBFFF"></div><div class="pal" style="left:920px;top:519px;background:#FFFF00"></div><div class="pal" style="left:932px;top:519px;background:#FFFF40"></div><div class="pal" style="left:944px;top:519px;background:#FFFF80"></div><div class="pal" style="left:956px;top:519px;background:#FFFFBF"></div><div class="pal" style="left:968px;top:519px;background:#FFFFFF"></div>
<div class="a lbl" style="left:7px;top:544px">Вложения:</div>
<div class="sel" style="left:204px;top:541px;width:121px;height:20px"></div>
<div class="a" style="left:209px;top:544px;font-size:12px;line-height:14px;color:#3a3a3a">Screenshot 2.png</div>
<div class="a" style="left:310px;top:544px;font-size:10px;line-height:12px;color:#222">▼</div>
<div class="btn" style="left:328px;top:541px;width:178px;height:19px;box-shadow:inset 1px 1px 0 #fff,0 1px 0 #d8d4c0;padding:0;font-size:13px;line-height:17px">Вставить в текст сообщения</div>
<div class="a lbl" style="left:7px;top:570px">Настройки:</div>
<div class="a s11" style="left:10px;top:588px;color:#3f4654"><span style="color:#1d56a2">BBCode</span> <i>ВКЛЮЧЕН</i></div>
<div class="a s11" style="left:10px;top:606px;color:#3f4654">[img] <i>ВКЛЮЧЕН</i></div>
<div class="a s11" style="left:10px;top:624px;color:#3f4654">[flash] <i>ВЫКЛЮЧЕН</i></div>
<div class="a s11" style="left:10px;top:642px;color:#3f4654">[url] <i>ВКЛЮЧЕН</i></div>
<div class="a s11" style="left:10px;top:660px;color:#3f4654">Смайлики <i>ВКЛЮЧЕНЫ</i></div>
<div class="cb" style="left:208px;top:575px"></div>
<div class="a" style="left:227px;top:574px;font-size:13px;line-height:15px;letter-spacing:0.07px;color:#3f4654">Отключить в этом сообщении BBCode</div>
<div class="cb" style="left:208px;top:596px"></div>
<div class="a" style="left:227px;top:595px;font-size:13px;line-height:15px;letter-spacing:0.07px;color:#3f4654">Отключить в этом сообщении смайлики</div>
<div class="cb" style="left:208px;top:617px"></div>
<div class="a" style="left:227px;top:616px;font-size:13px;line-height:15px;letter-spacing:0.07px;color:#3f4654">Не преобразовывать адреса URL в ссылки</div>
<div class="cb" style="left:208px;top:638px"></div>
<div class="a" style="left:227px;top:637px;font-size:13px;line-height:15px;letter-spacing:0.07px;color:#3f4654">Добавить подпись (её можно изменять в центре пользователя)</div>
<div class="cb" style="left:208px;top:659px"></div>
<div class="a" style="left:227px;top:658px;font-size:13px;line-height:15px;letter-spacing:0.07px;color:#3f4654">Сообщать мне о получении ответа</div>
<div id="bar"></div><div id="rcol"></div><div id="rcol2"></div>
<div class="bb" style="left:375px;top:688px;width:87px;height:16px">Предпросмотр</div>
<div class="bb" style="left:472px;top:687px;width:83px;height:18px;font-weight:bold;font-size:13px;line-height:17px;color:#3a3a40">Отправить</div>
<div class="bb" style="left:565px;top:688px;width:51px;height:16px">Отмена</div>
</body></html>
